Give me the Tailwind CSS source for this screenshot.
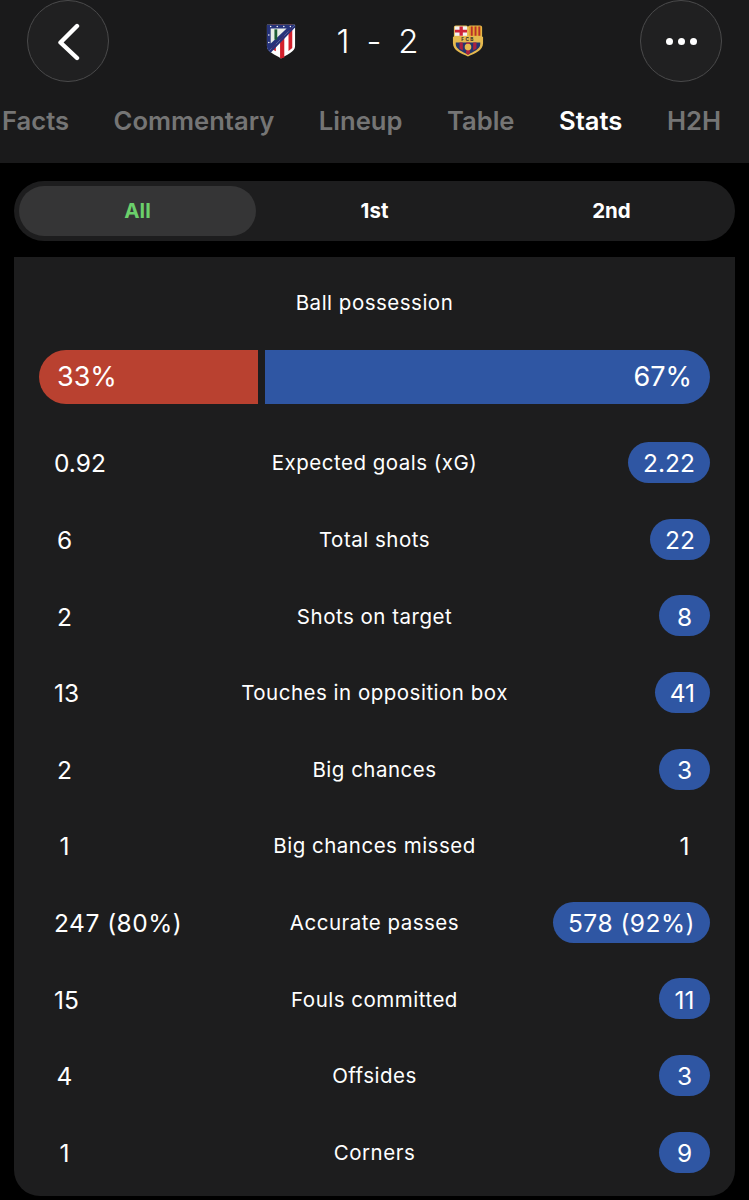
<!DOCTYPE html>
<html lang="en">
<head>
    <meta charset="UTF-8">
    <meta name="viewport" content="width=device-width, initial-scale=1.0">
    <title>Match stats</title>
    <script src="https://cdn.jsdelivr.net/npm/@tailwindcss/browser@4"></script>
</head>
<body class="bg-black font-[Inter,sans-serif] text-white overflow-hidden">
<div class="w-[749px] h-[1200px] overflow-hidden">
    <!-- Header -->
    <header class="h-[163px] bg-[#1a1a1b]">
        <div class="h-[82px] px-[27px] flex items-center justify-between">
            <button class="w-[82px] h-[82px] rounded-full bg-[#202021] border border-[#4a4a4b] flex items-center justify-center">
                <svg width="30" height="40" viewBox="0 0 30 40" fill="none" stroke="#fff" stroke-width="4.4" stroke-linecap="round" stroke-linejoin="round"><path d="M24 5 L7.5 21.5 L24 37"/></svg>
            </button>
            <div class="flex items-center">
                <!-- Atletico crest -->
                <svg width="30" height="37" viewBox="0 0 32 38">
                    <path d="M1 1H31V24C31 30 22 33 16 37C10 33 1 30 1 24Z" fill="#fff"/>
                    <path d="M6 1h4.500V29.500L6 27ZM15 1h4.500V36L16 37L15 36.500ZM24 1h4V26L24 29Z" fill="#d3202c"/>
                    <path d="M1 1H31L3 29C1.500 27.500 1 26 1 24Z" fill="#26337a"/>
                    <path d="M5 5H22L5 21Z" fill="#e8eee8"/>
                    <path d="M9 6h3v11H9Z" fill="#1d5c35"/>
                    <path d="M31 1V4L5 31L3 29Z" fill="#26337a"/>
                    <g fill="#fff"><circle cx="5" cy="3" r=".8"/><circle cx="12" cy="3" r=".8"/><circle cx="19" cy="3" r=".8"/><circle cx="26" cy="3" r=".8"/><circle cx="3" cy="12" r=".8"/><circle cx="3" cy="20" r=".8"/></g>
                </svg>
                <div class="ml-[41px] w-[82px] flex justify-between text-[33px] font-light leading-none">
                    <span>1</span><span>-</span><span>2</span>
                </div>
                <!-- Barca crest -->
                <svg class="ml-[33px]" width="32" height="34" viewBox="0 0 34 35">
                    <path d="M2 3Q2 1 4 1H15Q17 1 17 3Q17 1 19 1H30Q32 1 32 3V13H33V20C33 28 24 31 17 34C10 31 1 28 1 20V13H2Z" fill="#e5b94e"/>
                    <path d="M3 2H16V12H3Z" fill="#f2f2f2"/>
                    <path d="M8 2h3.500v10H8ZM3 5.500h13v3H3Z" fill="#cf2338"/>
                    <path d="M18 2h13v10H18Z" fill="#e3a52e"/>
                    <path d="M20 2h2v10h-2ZM24 2h2v10h-2ZM28 2h2v10h-2Z" fill="#b8302c"/>
                    <path d="M4 19H30V21C30 26 23 29 17 32C11 29 4 26 4 21Z" fill="#23366f"/>
                    <path d="M8 19h3.500V27.500L8 25.500ZM15 19h4V31L17 32L15 31ZM22.500 19H26V25.500L22.500 27.500Z" fill="#a9223f"/>
                    <circle cx="17" cy="24" r="3.500" fill="#e5b94e"/>
                    <text x="17" y="17.500" text-anchor="middle" font-family="Inter, sans-serif" font-size="5" font-weight="700" letter-spacing="1.500" fill="#2a2a2a">FCB</text>
                </svg>
            </div>
            <button class="w-[82px] h-[82px] rounded-full bg-[#202021] border border-[#4a4a4b] flex items-center justify-center gap-[5px]">
                <span class="w-[7px] h-[7px] rounded-full bg-white"></span>
                <span class="w-[7px] h-[7px] rounded-full bg-white"></span>
                <span class="w-[7px] h-[7px] rounded-full bg-white"></span>
            </button>
        </div>
        <nav class="mt-[21px] pl-[2px] flex gap-[44.500px] text-[25.600px] leading-[36px] font-semibold text-[#757575] whitespace-nowrap">
            <span>Facts</span>
            <span>Commentary</span>
            <span>Lineup</span>
            <span>Table</span>
            <span class="text-white">Stats</span>
            <span>H2H</span>
        </nav>
    </header>

    <!-- Period switch -->
    <div class="mt-[18px] mx-[14px] h-[60px] rounded-[30px] bg-[#1d1d1e] p-[5px] grid grid-cols-3 text-[20.500px] font-bold">
        <div class="rounded-[25px] bg-[#353536] flex items-center justify-center text-[#6bd06b]">All</div>
        <div class="flex items-center justify-center">1st</div>
        <div class="flex items-center justify-center">2nd</div>
    </div>

    <!-- Stats -->
    <section class="mt-[16px] mx-[14px] h-[939px] rounded-b-[26px] bg-[#1d1d1e] px-[25px]">
        <h2 class="pt-[31px] text-center text-[20.500px] tracking-[0.5px] leading-[30px]">Ball possession</h2>
        <div class="mt-[32px] h-[54px] flex gap-[7px] text-[27px]">
            <div class="w-[219px] rounded-l-[27px] bg-[#b94130] pl-[18px] flex items-center">33%</div>
            <div class="flex-1 rounded-r-[27px] bg-[#2f56a3] pr-[18px] flex items-center justify-end">67%</div>
        </div>
        <div class="mt-[21.500px] text-[24.500px]">
            <div class="h-[76.600px] grid grid-cols-[1fr_auto_1fr] items-center">
                <span class="justify-self-start min-w-[51px] px-[15px] text-center">0.92</span>
                <span class="text-[20.500px] tracking-[0.5px]">Expected goals (xG)</span>
                <span class="justify-self-end h-[41px] mb-[2px] pt-[2px] min-w-[51px] px-[15px] rounded-full bg-[#2f56a3] flex items-center justify-center">2.22</span>
            </div>
            <div class="h-[76.600px] grid grid-cols-[1fr_auto_1fr] items-center">
                <span class="justify-self-start min-w-[51px] px-[15px] text-center">6</span>
                <span class="text-[20.500px] tracking-[0.5px]">Total shots</span>
                <span class="justify-self-end h-[41px] mb-[2px] pt-[2px] min-w-[51px] px-[15px] rounded-full bg-[#2f56a3] flex items-center justify-center">22</span>
            </div>
            <div class="h-[76.600px] grid grid-cols-[1fr_auto_1fr] items-center">
                <span class="justify-self-start min-w-[51px] px-[15px] text-center">2</span>
                <span class="text-[20.500px] tracking-[0.5px]">Shots on target</span>
                <span class="justify-self-end h-[41px] mb-[2px] pt-[2px] min-w-[51px] px-[15px] rounded-full bg-[#2f56a3] flex items-center justify-center">8</span>
            </div>
            <div class="h-[76.600px] grid grid-cols-[1fr_auto_1fr] items-center">
                <span class="justify-self-start min-w-[51px] px-[15px] text-center">13</span>
                <span class="text-[20.500px] tracking-[0.5px]">Touches in opposition box</span>
                <span class="justify-self-end h-[41px] mb-[2px] pt-[2px] min-w-[51px] px-[15px] rounded-full bg-[#2f56a3] flex items-center justify-center">41</span>
            </div>
            <div class="h-[76.600px] grid grid-cols-[1fr_auto_1fr] items-center">
                <span class="justify-self-start min-w-[51px] px-[15px] text-center">2</span>
                <span class="text-[20.500px] tracking-[0.5px]">Big chances</span>
                <span class="justify-self-end h-[41px] mb-[2px] pt-[2px] min-w-[51px] px-[15px] rounded-full bg-[#2f56a3] flex items-center justify-center">3</span>
            </div>
            <div class="h-[76.600px] grid grid-cols-[1fr_auto_1fr] items-center">
                <span class="justify-self-start min-w-[51px] px-[15px] text-center">1</span>
                <span class="text-[20.500px] tracking-[0.5px]">Big chances missed</span>
                <span class="justify-self-end h-[41px] mb-[2px] pt-[2px] min-w-[51px] px-[15px] flex items-center justify-center">1</span>
            </div>
            <div class="h-[76.600px] grid grid-cols-[1fr_auto_1fr] items-center">
                <span class="justify-self-start min-w-[51px] px-[15px] text-center whitespace-nowrap tracking-[0.5px]">247 (80%)</span>
                <span class="text-[20.500px] tracking-[0.5px]">Accurate passes</span>
                <span class="justify-self-end h-[41px] mb-[2px] pt-[2px] min-w-[51px] px-[15px] rounded-full bg-[#2f56a3] flex items-center justify-center whitespace-nowrap tracking-[0.5px]">578 (92%)</span>
            </div>
            <div class="h-[76.600px] grid grid-cols-[1fr_auto_1fr] items-center">
                <span class="justify-self-start min-w-[51px] px-[15px] text-center">15</span>
                <span class="text-[20.500px] tracking-[0.5px]">Fouls committed</span>
                <span class="justify-self-end h-[41px] mb-[2px] pt-[2px] min-w-[51px] px-[15px] rounded-full bg-[#2f56a3] flex items-center justify-center">11</span>
            </div>
            <div class="h-[76.600px] grid grid-cols-[1fr_auto_1fr] items-center">
                <span class="justify-self-start min-w-[51px] px-[15px] text-center">4</span>
                <span class="text-[20.500px] tracking-[0.5px]">Offsides</span>
                <span class="justify-self-end h-[41px] mb-[2px] pt-[2px] min-w-[51px] px-[15px] rounded-full bg-[#2f56a3] flex items-center justify-center">3</span>
            </div>
            <div class="h-[76.600px] grid grid-cols-[1fr_auto_1fr] items-center">
                <span class="justify-self-start min-w-[51px] px-[15px] text-center">1</span>
                <span class="text-[20.500px] tracking-[0.5px]">Corners</span>
                <span class="justify-self-end h-[41px] mb-[2px] pt-[2px] min-w-[51px] px-[15px] rounded-full bg-[#2f56a3] flex items-center justify-center">9</span>
            </div>
        </div>
    </section>
</div>
</body>
</html>
